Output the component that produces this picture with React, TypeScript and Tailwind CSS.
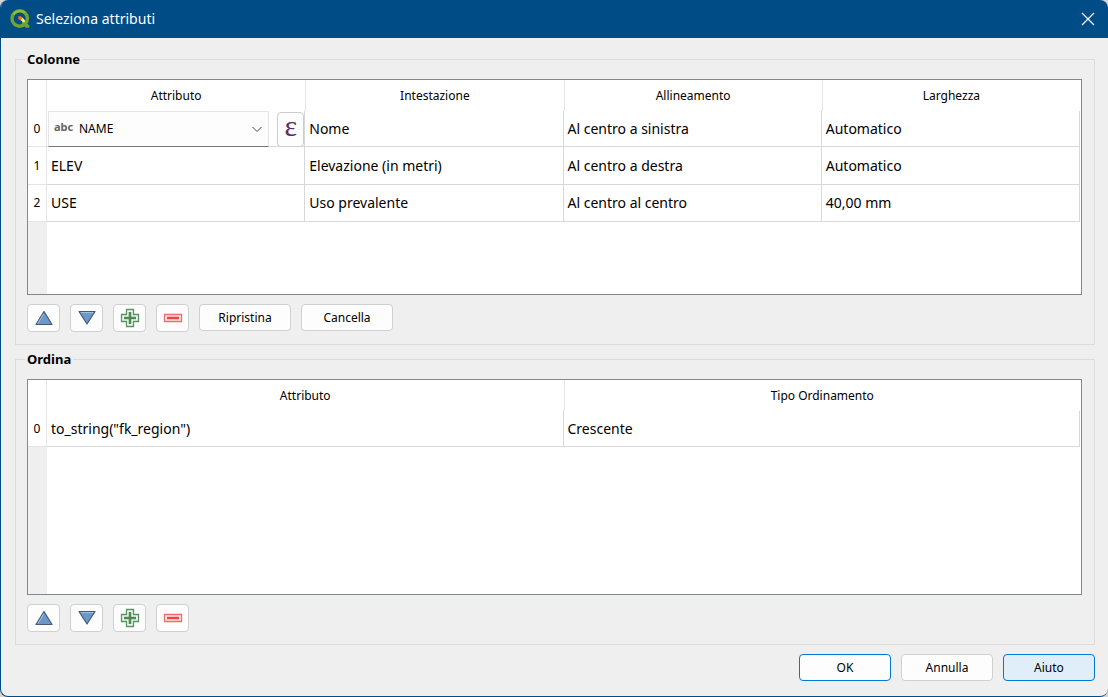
import { ReactNode } from "react";

interface ButtonProps {
  label: string;
  variant?: "plain" | "outlined" | "active";
}

interface GridProps {
  label: string;
  headers: string[];
  children: ReactNode;
}

const buttonStyles = {
  plain: "border-[#d0d0d0] bg-[#fdfdfd]",
  outlined: "border-[#0078d4] bg-[#fdfdfd]",
  active: "border-[#0078d4] bg-[#e0eef9]",
};

const cell =
  "border-r border-b border-[#d8d8d8] px-1 text-left text-sm font-normal";

const columns = [
  ["ELEV", "Elevazione (in metri)", "Al centro a destra", "Automatico"],
  ["USE", "Uso prevalente", "Al centro al centro", "40,00 mm"],
];

const QgisLogo = () => (
  <svg className="h-5 w-5" viewBox="0 0 20 20" aria-hidden="true">
    <circle cx="9.7" cy="9.5" r="7.7" fill="none" stroke="#6fa52c" strokeWidth="3.4" />
    <path d="M3.600 5.400A7.700 7.700 0 0 1 15 3.800" fill="none" stroke="#93bd3c" strokeWidth="2" />
    <path d="M12 12h2.500l4.800 4.500v2.300h-3.300l-4-4z" fill="#6fa52c" />
    <path d="M9.500 8.500h3l2.300 2.700v2h-1.500l-4-3.200z" fill="#f3e6a0" />
    <path d="M8.300 7.300h2.700l1.400 2-1.500 2-2.600-1.400z" fill="#ee7913" />
  </svg>
);

const UpIcon = () => (
  <svg className="h-5 w-5" viewBox="0 0 20 20" aria-hidden="true">
    <path d="M10 3.500 18 16.500H2z" fill="#6d97c8" stroke="#415a75" strokeWidth="1.2" strokeLinejoin="round" />
    <path d="M9.700 5.800 4 15.300" stroke="#a7c4e4" strokeWidth="1" />
  </svg>
);

const DownIcon = () => (
  <svg className="h-5 w-5" viewBox="0 0 20 20" aria-hidden="true">
    <path d="M10 16 18 3.500H2z" fill="#6d97c8" stroke="#415a75" strokeWidth="1.2" strokeLinejoin="round" />
    <path d="M3.800 4.600h12.400" stroke="#a7c4e4" strokeWidth="1" />
  </svg>
);

const PlusIcon = () => (
  <svg className="h-5 w-5" viewBox="0 0 20 20" aria-hidden="true">
    <path d="M6.500 1.500h7v5h5v7h-5v5h-7v-5h-5v-7h5z" fill="#eef7ee" stroke="#5a9360" strokeWidth="1.3" />
    <path d="M8.700 4h2.600v4.700H16v2.600h-4.700V16H8.700v-4.700H4V8.700h4.700z" fill="#4f8a55" />
  </svg>
);

const MinusIcon = () => (
  <svg className="h-5 w-5" viewBox="0 0 20 20" aria-hidden="true">
    <path d="M1.500 6.500h17v7h-17z" fill="#fdecec" stroke="#f26a6a" strokeWidth="1.3" />
    <path d="M4 8.700h12v2.600H4z" fill="#ef4444" />
  </svg>
);

const Button = ({ label, variant = "plain" }: ButtonProps) => (
  <button
    type="button"
    className={`h-[27px] w-[92px] rounded-sm border text-xs ${buttonStyles[variant]}`}
  >
    {label}
  </button>
);

const ToolButton = ({ label, icon }: { label: string; icon: ReactNode }) => (
  <button
    type="button"
    aria-label={label}
    className="flex h-7 w-[33px] items-center justify-center rounded-sm border border-[#d0d0d0] bg-[#fdfdfd]"
  >
    {icon}
  </button>
);

const Toolbar = ({ children }: { children?: ReactNode }) => (
  <div className="mt-[9px] flex gap-2.5">
    <ToolButton label="Sposta su" icon={<UpIcon />} />
    <ToolButton label="Sposta giù" icon={<DownIcon />} />
    <ToolButton label="Aggiungi" icon={<PlusIcon />} />
    <ToolButton label="Rimuovi" icon={<MinusIcon />} />
    {children}
  </div>
);

const Group = ({ title, children }: { title: string; children: ReactNode }) => (
  <fieldset className="border border-[#dcdcdc] pt-2.5 pr-3 pb-3 pl-[11px]">
    <legend className="-mx-0.5 px-0.5 text-[13px] leading-5 font-bold">{title}</legend>
    {children}
  </fieldset>
);

const Grid = ({ label, headers, children }: GridProps) => (
  <div className="flex min-h-54 flex-col border border-[#828790] bg-white pr-px">
    <table
      aria-label={label}
      className="w-full table-fixed border-separate border-spacing-0"
    >
      <thead>
        <tr className="h-[31px]">
          <td className="w-[19px] border-r border-[#e5e5e5]" />
          {headers.map((header) => (
            <th
              key={header}
              scope="col"
              className="border-l border-[#e5e5e5] text-xs font-normal nth-2:border-l-0"
            >
              {header}
            </th>
          ))}
        </tr>
      </thead>
      <tbody>{children}</tbody>
    </table>
    <div className="w-[19px] flex-1 bg-[#efefef]" />
  </div>
);

const RowNumber = ({ index }: { index: number }) => (
  <th
    scope="row"
    className="border-r border-b border-[#e5e5e5] text-center text-xs font-normal"
  >
    {index}
  </th>
);

const AttributeEditor = () => (
  <div className="-mb-px flex h-9">
    <div className="relative ml-px flex-1">
      <select
        aria-label="Attributo"
        className="h-full w-full appearance-none border border-[#e5e5e5] border-b-[#767676] bg-[#fdfdfd] pl-[30px] text-xs"
      >
        <option>NAME</option>
      </select>
      <span className="pointer-events-none absolute top-2 left-1.5 text-[11px] leading-4 font-bold text-[#666666]">
        abc
      </span>
      <svg
        className="pointer-events-none absolute top-3 right-1.5 h-3 w-3"
        viewBox="0 0 12 12"
        aria-hidden="true"
      >
        <path d="M1.500 4 6 8.500 10.500 4" fill="none" stroke="#444" />
      </svg>
    </div>
    <button
      type="button"
      aria-label="Espressione"
      className="mt-px ml-2 flex w-[27px] items-center justify-center rounded-sm border border-[#cccccc] bg-[#fdfdfd] pb-2 font-['Liberation_Serif',serif] text-3xl leading-6 text-[#5c2d6c]"
    >
      ε
    </button>
  </div>
);

const App = () => (
  <div className="bg-[#d5d5d5] font-['Noto_Sans',sans-serif] text-black">
    <div className="flex min-h-screen flex-col overflow-hidden rounded-lg border-b border-l border-[#004c87] bg-[#efefef]">
      <header className="flex h-[38px] items-center bg-[#004c87] pr-3 pl-[9px] text-white">
        <QgisLogo />
        <h1 className="ml-1.5 flex-1 text-sm">Seleziona attributi</h1>
        <button type="button" aria-label="Chiudi">
          <svg className="h-4 w-4" viewBox="0 0 16 16" aria-hidden="true">
            <path d="M2 2l12 12M14 2 2 14" stroke="white" strokeWidth="1.2" />
          </svg>
        </button>
      </header>
      <main className="flex flex-1 flex-col pt-[11px] pr-[13px] pb-3.5 pl-3.5">
        <div className="flex flex-1 flex-col gap-1">
          <Group title="Colonne">
            <Grid
              label="Colonne"
              headers={["Attributo", "Intestazione", "Allineamento", "Larghezza"]}
            >
              <tr className="h-9">
                <RowNumber index={0} />
                <td className="border-r border-b border-[#d8d8d8]">
                  <AttributeEditor />
                </td>
                <td className={cell}>Nome</td>
                <td className={cell}>Al centro a sinistra</td>
                <td className={cell}>Automatico</td>
              </tr>
              {columns.map((row, i) => (
                <tr key={row[0]} className="h-[38px] last:h-[37px]">
                  <RowNumber index={i + 1} />
                  {row.map((value) => (
                    <td key={value} className={cell}>
                      {value}
                    </td>
                  ))}
                </tr>
              ))}
            </Grid>
            <Toolbar>
              <Button label="Ripristina" />
              <Button label="Cancella" />
            </Toolbar>
          </Group>
          <Group title="Ordina">
            <Grid label="Ordina" headers={["Attributo", "Tipo Ordinamento"]}>
              <tr className="h-9">
                <RowNumber index={0} />
                <td className={cell}>to_string("fk_region")</td>
                <td className={cell}>Crescente</td>
              </tr>
            </Grid>
            <Toolbar />
          </Group>
        </div>
        <footer className="mt-[9px] flex h-7 justify-end gap-2.5">
          <Button label="OK" variant="outlined" />
          <Button label="Annulla" />
          <Button label="Aiuto" variant="active" />
        </footer>
      </main>
    </div>
  </div>
);

export default App;
